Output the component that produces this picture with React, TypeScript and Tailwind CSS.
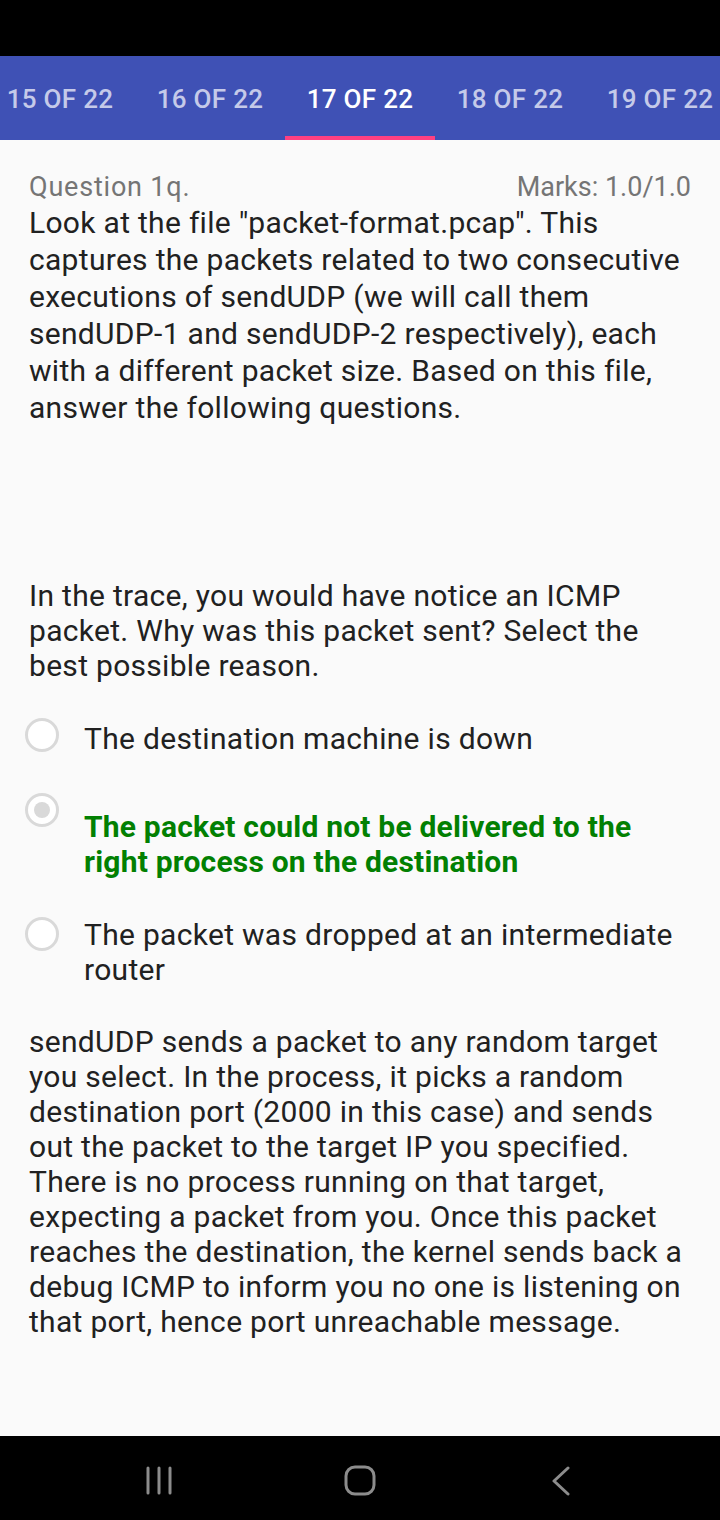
import React from 'react';

const tabs = ['15 OF 22', '16 OF 22', '17 OF 22', '18 OF 22', '19 OF 22'];

function Radio({ checked }: { checked?: boolean }) {
  return (
    <div className="w-[34px] h-[34px] rounded-full border-[3px] border-[#d9d9d9] flex items-center justify-center shrink-0 bg-white">
      {checked && <div className="w-[16px] h-[16px] rounded-full bg-[#d9d9d9]" />}
    </div>
  );
}

export default function App() {
  return (
    <div className="w-[720px] h-[1520px] flex flex-col bg-[#fafafa] overflow-hidden" style={{ fontFamily: 'Roboto, "Noto Sans", sans-serif' }}>
      <div className="h-[56px] bg-black shrink-0" />
      <div className="h-[84px] bg-[#3f51b5] shrink-0 flex ml-[-15px]">
        {tabs.map((t, i) => (
          <div key={t} className="w-[150px] shrink-0 flex flex-col">
            <div className={`flex-1 flex items-center justify-center text-[26px] tracking-[0.3px] font-medium pt-[6px] ${i === 2 ? 'text-white' : 'text-[#c5cae9]'}`}>{t}</div>
            <div className={`h-[4px] ${i === 2 ? 'bg-[#ff4081]' : ''}`} />
          </div>
        ))}
      </div>

      <div className="flex-1 px-[29px] pt-[30px] text-[#212121] tracking-[0.3px]">
        <div className="flex justify-between text-[27px] text-[#757575] leading-[34px] tracking-normal">
          <span className="tracking-[0.8px]">Question 1q.</span>
          <span>Marks: 1.0/1.0</span>
        </div>
        <p className="text-[30px] leading-[37px]">
          Look at the file "packet-format.pcap". This captures the packets related to two consecutive executions of sendUDP (we will call them sendUDP-1 and sendUDP-2 respectively), each with a different packet size. Based on this file, answer the following questions.
        </p>

        <p className="text-[30px] leading-[35px] mt-[152px]">
          In the trace, you would have notice an ICMP packet. Why was this packet sent? Select the best possible reason.
        </p>

        <div className="mt-[35px] flex flex-col ml-[-4px]">
          <div className="flex items-start gap-[25px]">
            <div><Radio /></div>
            <span className="text-[30px] leading-[35px] pt-[3px]">The destination machine is down</span>
          </div>
          <div className="flex items-start gap-[25px] mt-[37px]">
            <div><Radio checked /></div>
            <span className="text-[30px] leading-[35px] font-bold tracking-[0.2px] text-[#028002] pt-[16px]">The packet could not be delivered to the right process on the destination</span>
          </div>
          <div className="flex items-start gap-[25px] mt-[38px]">
            <div><Radio /></div>
            <span className="text-[30px] leading-[35px]">The packet was dropped at an intermediate router</span>
          </div>
        </div>

        <p className="text-[30px] leading-[35px] mt-[37px]">
          sendUDP sends a packet to any random target you select. In the process, it picks a random destination port (2000 in this case) and sends out the packet to the target IP you specified. There is no process running on that target, expecting a packet from you. Once this packet reaches the destination, the kernel sends back a debug ICMP to inform you no one is listening on that port, hence port unreachable message.
        </p>
      </div>

      <div className="h-[84px] bg-black shrink-0 flex items-center justify-center gap-[161px] pt-[5px]">
        <div className="w-[40px] flex justify-center">
          <svg width="28" height="29" viewBox="0 0 28 29">
            <g stroke="#8c8c8c" strokeWidth="3" strokeLinecap="round">
              <line x1="3" y1="2" x2="3" y2="27" />
              <line x1="14" y1="2" x2="14" y2="27" />
              <line x1="25" y1="2" x2="25" y2="27" />
            </g>
          </svg>
        </div>
        <div className="w-[40px] flex justify-center">
          <svg width="32" height="31" viewBox="0 0 32 31">
            <rect x="2" y="2" width="28" height="27" rx="9" fill="none" stroke="#8c8c8c" strokeWidth="3" />
          </svg>
        </div>
        <div className="w-[40px] flex justify-center">
          <svg width="20" height="30" viewBox="0 0 20 30">
            <polyline points="17,2 3,15 17,28" fill="none" stroke="#8c8c8c" strokeWidth="3" strokeLinecap="round" strokeLinejoin="round" />
          </svg>
        </div>
      </div>
    </div>
  );
}
